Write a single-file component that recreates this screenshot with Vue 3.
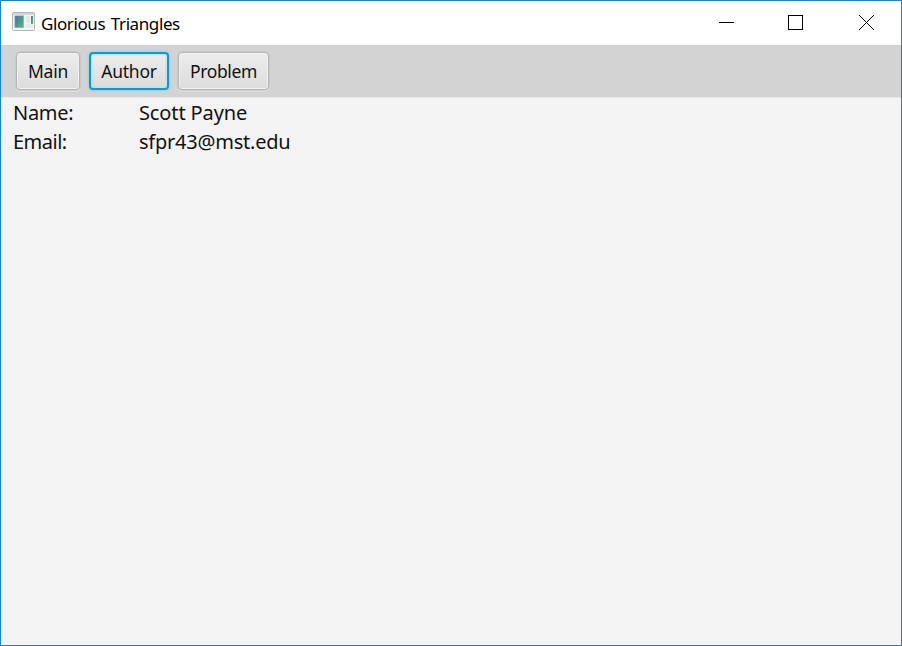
<script setup>
import { ref } from 'vue'

const tabs = ['Main', 'Author', 'Problem']
const active = ref('Author')
const details = [
  { key: 'name', label: 'Name:', value: 'Scott Payne' },
  { key: 'email', label: 'Email:', value: 'sfpr43@mst.edu' },
]
</script>

<template>
  <div class="window">
    <header class="titlebar">
      <svg class="app-icon" width="23" height="19" viewBox="0 0 23 19">
        <defs>
          <linearGradient id="pane" x1="0" y1="0" x2="1" y2="1">
            <stop offset="0" stop-color="#3d78a6" />
            <stop offset="1" stop-color="#62b37c" />
          </linearGradient>
        </defs>
        <rect x="0.5" y="0.5" width="22" height="18" rx="1" fill="#f4f5f6" stroke="#b0b5ba" />
        <rect x="1" y="1" width="21" height="2" fill="#d3d7db" />
        <rect x="2.8" y="3.8" width="9" height="12" fill="url(#pane)" stroke="#a9b9c0" stroke-width="0.6" />
        <rect x="14" y="4" width="4" height="7" fill="#e4e6e8" />
        <rect x="14" y="12" width="7" height="4" fill="#e9ebed" />
        <rect x="19" y="4" width="2" height="8" fill="url(#pane)" />
      </svg>
      <h1 class="title">Glorious Triangles</h1>
      <div class="controls">
        <svg class="control" width="70" height="44" viewBox="0 0 70 44" shape-rendering="crispEdges">
          <path d="M27 21.5H42" stroke="#000" />
        </svg>
        <svg class="control" width="70" height="44" viewBox="0 0 70 44" shape-rendering="crispEdges">
          <rect x="26.5" y="14.5" width="14" height="14" fill="none" stroke="#000" />
        </svg>
        <svg class="control" width="69" height="44" viewBox="0 0 69 44">
          <path d="M27 14L42 29M42 14L27 29" stroke="#000" />
        </svg>
      </div>
    </header>
    <nav class="toolbar">
      <button
        v-for="tab in tabs"
        :key="tab"
        class="tab"
        :class="[tab.toLowerCase(), { focused: active === tab }]"
        @click="active = tab"
      >{{ tab }}</button>
    </nav>
    <dl class="details">
      <template v-for="row in details" :key="row.key">
        <dt :class="row.key">{{ row.label }}</dt>
        <dd :class="row.key">{{ row.value }}</dd>
      </template>
    </dl>
  </div>
</template>

<style>
body {
  margin: 0;
  overflow: hidden;
}
</style>

<style scoped>
.window {
  box-sizing: border-box;
  width: 902px;
  height: 646px;
  border: 1px solid #1883d7;
  background: #f4f4f4;
  display: flex;
  flex-direction: column;
  font-family: "Noto Sans", "Open Sans", sans-serif;
  color: #111;
}
.titlebar {
  height: 44px;
  flex: none;
  display: flex;
  align-items: center;
  background: #fff;
  padding-left: 11px;
}
.app-icon {
  margin-bottom: 3px;
  flex: none;
}
.title {
  margin: 1px 0 0 6px;
  font-size: 17px;
  line-height: 24px;
  font-weight: 400;
  letter-spacing: -0.4px;
  word-spacing: 1.6px;
  color: #000;
  white-space: nowrap;
}
.controls {
  margin-left: auto;
  display: flex;
}
.control {
  display: block;
}
.toolbar {
  height: 52px;
  flex: none;
  box-sizing: border-box;
  background: #d3d3d3;
  box-shadow: 0 1px 0 #e8e8e8;
  padding: 7px 15px 0;
  display: flex;
  align-items: flex-start;
  gap: 9px;
}
.tab {
  box-sizing: border-box;
  height: 38px;
  padding: 0;
  border: 1px solid #b5b5b5;
  border-radius: 4px;
  background: linear-gradient(#ededed, #dcdcdc);
  box-shadow: inset 0 0 0 1px #f1f1f1, 0 0 0 0.5px #bebebe, 0 1.5px 0 #e5e5e5;
  font-family: inherit;
  font-size: 17.5px;
  line-height: 34px;
  letter-spacing: -0.25px;
  color: #111;
  white-space: nowrap;
}
.tab.main {
  width: 64px;
}
.tab.author {
  width: 80px;
}
.tab.problem {
  width: 91px;
  letter-spacing: -0.4px;
}
.tab.focused {
  border: 2px solid #039ed3;
  box-shadow: 0 0 2px 1px #a0cfdf, inset 0 0 2px 1px #b9e0ec;
  outline: none;
}
.details {
  margin: 0;
  padding: 2px 12px;
  display: grid;
  grid-template-columns: 126px auto;
  grid-template-rows: 28px 29px;
  align-items: center;
  font-size: 20px;
  line-height: 28px;
  letter-spacing: -0.12px;
  white-space: nowrap;
}
dt,
dd {
  margin: 0;
}
dt.name {
  letter-spacing: -0.3px;
}
dt.email {
  letter-spacing: -0.5px;
}
dd.email {
  letter-spacing: -0.23px;
}
</style>
